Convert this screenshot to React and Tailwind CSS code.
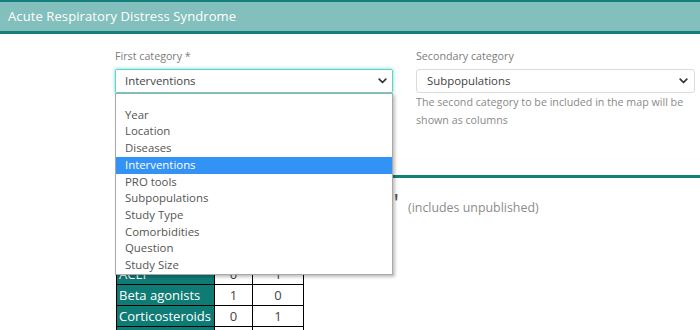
import React from "react";

function Chevron() {
  return (
    <svg width="9" height="6" viewBox="0 0 9 6" className="shrink-0">
      <path d="M1.2 1.2 L4.5 4.5 L7.8 1.2" fill="none" stroke="#333" strokeWidth="1.7" strokeLinecap="round" strokeLinejoin="round" />
    </svg>
  );
}

export default function App() {
  const options = ["Year", "Location", "Diseases", "Interventions", "PRO tools", "Subpopulations", "Study Type", "Comorbidities", "Question", "Study Size"];
  const rows = [
    ["", "A", "B"],
    ["Antibiotics", "2", "0"],
    ["ACEi", "0", "1"],
    ["Beta agonists", "1", "0"],
    ["Corticosteroids", "0", "1"],
    ["Diuretics", "1", "1"],
  ];
  return (
    <div className="w-[700px] h-[330px] overflow-hidden bg-white font-['Open_Sans',sans-serif]">
      <div className="h-[34px] border-t-2 border-b-[3px] border-[#14807c] bg-[#82bfbd] flex items-center px-2 text-white text-[13px] tracking-[0.1px]">
        Acute Respiratory Distress Syndrome
      </div>
      <div className="flex gap-[23px] pl-[115px] pt-[12px]">
        <div className="w-[278px]">
          <div className="text-[10.7px] leading-[20px] mb-[3px] text-[#7d7d7d]">First category *</div>
          <div className="relative">
            <div className="h-[24px] border border-[#5fd3cb] rounded-[2px] shadow-[0_0_3px_1px_rgba(95,211,203,0.55)] flex items-center justify-between pl-[9px] pr-[5px] text-[11.4px] text-[#444]">
              <span>Interventions</span>
              <Chevron />
            </div>
            <div className="absolute top-full left-0 z-10 w-[278px] bg-white border border-[#a9a9a9] shadow-[2px_2px_3px_rgba(0,0,0,0.25)]">
              <div className="h-[12.6px]"></div>
              {options.map((o, i) => (
                <div
                  key={i}
                  className={
                    o === "Interventions"
                      ? "h-[16.74px] leading-[16.74px] px-[9px] text-[11.4px] bg-[#3392f6] text-white"
                      : "h-[16.74px] leading-[16.74px] px-[9px] text-[11.4px] text-[#555]"
                  }
                >
                  {o}
                </div>
              ))}
            </div>
          </div>
        </div>
        <div className="w-[279px]">
          <div className="text-[10.7px] leading-[20px] mb-[3px] text-[#7d7d7d]">Secondary category</div>
          <div className="h-[24px] border border-[#dcdcdc] rounded-[3px] flex items-center justify-between pl-[10px] pr-[6px] text-[11.4px] text-[#444]">
            <span>Subpopulations</span>
            <Chevron />
          </div>
          <div className="text-[10.7px] leading-[18px] text-[#8a8a8a]">
            The second category to be included in the map will be shown as columns
          </div>
        </div>
      </div>
      <div className="ml-[115px] mt-[46px] border-t-[3px] border-[#137f7a]">
        <div className="flex items-baseline pt-[8px] h-[43px]">
          <div className="w-[284px] flex justify-end whitespace-nowrap overflow-hidden text-[26px] leading-[32px] text-[#555]">
            <span>Map "Interventions" / "Subpopulations"</span>
          </div>
          <span className="ml-[9px] text-[12.4px] text-[#8c8c8c]">(includes unpublished)</span>
        </div>
        <div className="ml-px grid grid-cols-[98px_38px_51px] w-[187px] border-l border-t border-black">
          {rows.map((r, i) => (
            <React.Fragment key={i}>
              <div className="h-[21px] border-r border-b border-black bg-[#0f7b75] text-white text-[13px] leading-[20px] pl-[2px] whitespace-nowrap">
                {r[0]}
              </div>
              <div className="h-[21px] border-r border-b border-black text-center text-[13px] leading-[20px] text-[#444]">{r[1]}</div>
              <div className="h-[21px] border-r border-b border-black text-center text-[13px] leading-[20px] text-[#444]">{r[2]}</div>
            </React.Fragment>
          ))}
        </div>
      </div>
    </div>
  );
}
